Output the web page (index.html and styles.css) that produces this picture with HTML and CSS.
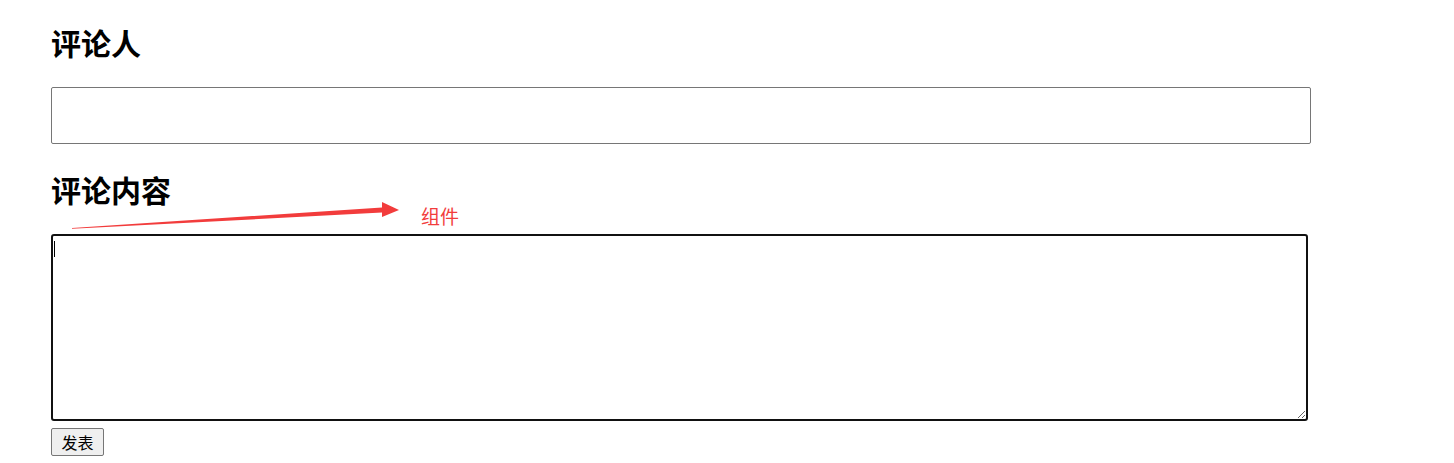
FILE: index.html
```html
<!DOCTYPE html>
<html lang="zh">
<head>
<meta charset="utf-8">
<title>评论</title>
<link rel="stylesheet" href="styles.css">
</head>
<body>
<div class="page">
  <h2 class="label">评论人</h2>
  <input class="name-input" type="text">
  <div class="content-block">
    <h2 class="label">评论内容</h2>
    <div class="annotation">
      <svg class="arrow" width="340" height="30" viewBox="0 0 340 30">
        <polygon points="0,26 310,5.5 310,0 327,8 310,15 310,10.5 0,26.8" fill="#f23c3c"/>
      </svg>
      <span class="annotation-text">组件</span>
    </div>
    <div class="textarea-wrap">
      <textarea class="content-input"></textarea>
      <span class="caret"></span>
    </div>
    <button class="submit" type="button">发表</button>
  </div>
</div>
</body>
</html>
```
FILE: styles.css
```css
html, body {
  margin: 0;
  padding: 0;
  background: #fff;
}
body {
  font-family: "Noto Sans CJK SC", "Noto Sans", sans-serif;
  color: #000;
}
.page {
  padding: 20px 0 0 51px;
}
.label {
  margin: 0;
  font-size: 30px;
  font-weight: 700;
  line-height: 44px;
}
.name-input {
  display: block;
  box-sizing: border-box;
  width: 1260px;
  height: 57px;
  margin: 23px 0 0 0;
  border: 1px solid #767676;
  border-radius: 2px;
  padding: 0 4px;
  font: inherit;
}
.content-block {
  position: relative;
  padding-top: 23px;
}
.annotation {
  position: absolute;
  z-index: 1;
  left: 21px;
  top: 58px;
  width: 420px;
  height: 30px;
}
.arrow {
  position: absolute;
  left: 0;
  top: 0;
}
.annotation-text {
  position: absolute;
  left: 349px;
  top: 1px;
  font-size: 19px;
  line-height: 26px;
  color: #f23c3c;
}
.textarea-wrap {
  position: relative;
  margin-top: 23px;
  width: 1257px;
  height: 187px;
}
.content-input {
  display: block;
  box-sizing: border-box;
  width: 1257px;
  height: 187px;
  margin: 0;
  border: 2px solid #111;
  border-radius: 3px;
  outline: none;
  resize: both;
  font: inherit;
}
.caret {
  position: absolute;
  left: 3px;
  top: 7px;
  width: 1px;
  height: 16px;
  background: #000;
}
.submit {
  display: block;
  margin-top: 7px;
  height: 28px;
  padding: 0 9.5px;
  font-family: "Noto Sans CJK SC", sans-serif;
  font-size: 16px;
  line-height: 26px;
  background: #efefef;
  border: 1px solid #767676;
  border-radius: 2px;
  color: #000;
}
```
